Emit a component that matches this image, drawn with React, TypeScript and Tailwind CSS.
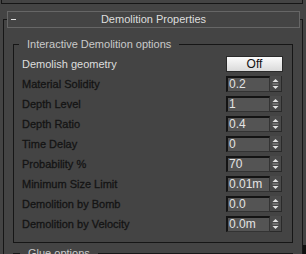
import React from "react";

const rows: { label: string; value: string }[] = [
  { label: "Material Solidity", value: "0.2" },
  { label: "Depth Level", value: "1" },
  { label: "Depth Ratio", value: "0.4" },
  { label: "Time Delay", value: "0" },
  { label: "Probability %", value: "70" },
  { label: "Minimum Size Limit", value: "0.01m" },
  { label: "Demolition by Bomb", value: "0.0" },
  { label: "Demolition by Velocity", value: "0.0m" },
];

function Spinner() {
  return (
    <div className="w-[12px] h-[16px] bg-[#4a4a4a] border-r border-b border-[#2a2a2a]">
      <svg width="11" height="15" viewBox="0 0 11 15">
        <polygon points="2.5,6 8.5,6 5.5,3" fill="#e2e2e2" />
        <line x1="2.5" y1="8" x2="8.5" y2="8" stroke="#9a9a9a" strokeWidth="1" />
        <polygon points="2.5,10 8.5,10 5.5,13" fill="#e2e2e2" />
      </svg>
    </div>
  );
}

function NumField({ value }: { value: string }) {
  return (
    <div className="flex">
      <div className="w-[44px] h-[16px] bg-[#545454] border-t-2 border-l-2 border-[#141414] border-r border-b border-r-[#333] border-b-[#333] text-[#e4e4e4] text-[12px] leading-[13px] pl-[1px] font-['Liberation_Sans',Arial,sans-serif]">
        {value}
      </div>
      <Spinner />
    </div>
  );
}

export default function App() {
  return (
    <div className="w-[306px] h-[254px] overflow-hidden bg-[#444444] font-['Liberation_Sans',Arial,sans-serif] text-[11px]">
      <div className="ml-[1px] w-[302px] h-[4px] border-x border-b border-[#161616]" />
      <div className="flex">
        <div className="mt-[15px] ml-[3px] w-[300px] h-[260px] border-x border-t border-[#161616]">
          <div className="-mt-[9px] ml-[3px] w-[293px] h-[17px] border border-[#666666] bg-[#444444] grid grid-cols-[16px_1fr_16px] items-center">
            <div className="pl-[3px] flex items-center">
              <div className="w-[5px] h-[1px] bg-[#e0e0e0]" />
            </div>
            <div className="text-center text-[#dedede] leading-[15px]">Demolition Properties</div>
            <div />
          </div>

          <fieldset className="mt-[9px] ml-[9px] w-[280px] border border-[#161616]">
            <legend className="ml-[5px] px-[8px] leading-[14px] text-[#cacaca]">
              Interactive Demolition options
            </legend>
            <div className="pt-[3px] pb-[8px] pl-[8px] pr-[10px] flex flex-col">
              <div className="h-[20px] flex items-center justify-between">
                <span className="text-[#dedede]">Demolish geometry</span>
                <button className="w-[57px] h-[16px] -mr-[1px] bg-gradient-to-b from-[#fbfbfb] to-[#dadada] border border-[#2a2a2a] text-[#111] text-[12px] leading-[14px] text-center">
                  Off
                </button>
              </div>
              {rows.map((r) => (
                <div key={r.label} className="h-[20px] flex items-center justify-between">
                  <span className="text-[#141414] [-webkit-text-stroke:0.3px_#141414]">{r.label}</span>
                  <NumField value={r.value} />
                </div>
              ))}
            </div>
          </fieldset>

          <fieldset className="mt-[3px] ml-[9px] w-[280px] h-[40px] border border-[#161616]">
            <legend className="ml-[6px] px-[8px] leading-[14px] text-[#cacaca]">Glue options</legend>
          </fieldset>
        </div>
        <div className="mt-[241px] w-[3px] h-[20px] bg-[#101010]" />
      </div>
    </div>
  );
}
